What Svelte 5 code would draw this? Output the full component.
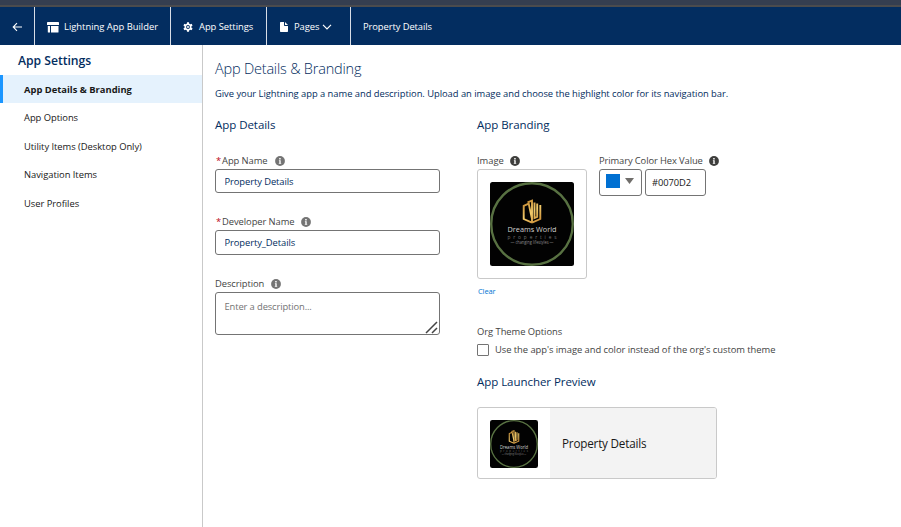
<script>
  const menu = ['App Details & Branding', 'App Options', 'Utility Items (Desktop Only)', 'Navigation Items', 'User Profiles'];
  let active = $state(0);
  let appName = $state('Property Details');
  let developerName = $state('Property_Details');
  let hex = $state('#0070D2');
</script>

{#snippet info(dark)}
  <svg class="info" class:dark viewBox="0 0 10 10" aria-hidden="true">
    <circle cx="5" cy="5" r="4.9" />
    <path d="M4.2 2.1h1.5v1.3H4.2zM3.9 4.2h1.8v2.8h.5v.8H3.8V7h.5V5h-.4z" />
  </svg>
{/snippet}

{#snippet logo(size)}
  <svg class="logo" width={size} height={size} viewBox="0 0 84 84">
    <defs>
      <linearGradient id={`gold${size}`} gradientUnits="userSpaceOnUse" x1="33" y1="18" x2="51" y2="42">
        <stop offset="0" stop-color="#b97a26" />
        <stop offset=".5" stop-color="#f3cc6c" />
        <stop offset="1" stop-color="#c07d28" />
      </linearGradient>
    </defs>
    <rect width="84" height="84" rx={size > 60 ? 2.5 : 4} fill="#020202" />
    <circle cx="42" cy="42" r="40.8" fill="none" stroke="#587142" stroke-width="2.4" />
    <g fill="none" stroke={`url(#gold${size})`} stroke-width="1.9">
      <path d="M42 40.600l-8.300-3.600V23.800l5-2.200 3.300 15.500" />
      <path d="M37.500 20.300l4.500-1.600v21.800" />
      <path d="M42 40.600l8.300-3.600V23" />
      <path d="M44.500 20.500V36l2.700-1.200V21.500" />
    </g>
    <text x="42" y="50.3" font-size="7.8" textLength="49" lengthAdjust="spacingAndGlyphs" fill="#d2d2d2">Dreams World</text>
    <text x="42" y="56.5" font-size="4.8" textLength="49" fill="#747474">properties</text>
    <text x="42" y="62" font-size="4.8" textLength="43" lengthAdjust="spacingAndGlyphs" fill="#8a8a8a">— changing lifestyles —</text>
  </svg>
{/snippet}

<div class="app">
  <div class="chrome"></div>
  <header>
    <button class="back" aria-label="Back">
      <svg width="11" height="10" viewBox="0 0 11 10"><path d="M10 5H1.5M5 1.2L1.2 5 5 8.8" fill="none" stroke="#fff" stroke-width="1.1" /></svg>
    </button>
    <div class="tab builder">
      <svg width="12" height="11" viewBox="0 0 12 11" fill="#fff"><path d="M.8 0h10.4q.8 0 .8.8V3H0V.8Q0 0 .8 0zM.8 4H3v6.500H1.400Q.8 10.500.8 9.900zM4 4h7.500v5.900q0 .6-.6.6H4z" /></svg>
      <span>Lightning App Builder</span>
    </div>
    <div class="tab settings">
      <svg width="10" height="10" viewBox="0 0 10 10"><path d="M5 .3v9.400M.9 2.700l8.200 4.600M9.100 2.700L.9 7.300" stroke="#fff" stroke-width="2.100" /><circle cx="5" cy="5" r="2.700" fill="#032d60" stroke="#fff" stroke-width="1.600" /><circle cx="5" cy="5" r="1" fill="#fff" /></svg>
      <span>App Settings</span>
    </div>
    <div class="tab pages">
      <svg width="8" height="10" viewBox="0 0 8 10" fill="#fff"><path d="M.7 0H4v3.200q0 .8.8.8H8v5.300q0 .7-.7.7H.7Q0 10 0 9.300V.7Q0 0 .7 0zM5 0l3 3H5.300Q5 3 5 2.700z" /></svg>
      <span>Pages</span>
      <svg class="chev" width="10" height="6" viewBox="0 0 10 6"><path d="M1 .8l4 4 4-4" fill="none" stroke="#fff" stroke-width="1.200" /></svg>
    </div>
    <div class="tab current"><span>Property Details</span></div>
  </header>

  <div class="body">
    <nav>
      <h2>App Settings</h2>
      {#each menu as item, i}
        <button class="item" class:active={active === i} onclick={() => (active = i)}>{item}</button>
      {/each}
    </nav>

    <main>
      <h1>App Details &amp; Branding</h1>
      <p class="lead">Give your Lightning app a name and description. Upload an image and choose the highlight color for its navigation bar.</p>

      <div class="columns">
        <section class="details">
          <h3>App Details</h3>
          <div class="field">
            <label for="name"><i>*</i>App Name {@render info(false)}</label>
            <input id="name" bind:value={appName} />
          </div>
          <div class="field">
            <label for="dev"><i>*</i>Developer Name {@render info(false)}</label>
            <input id="dev" class="tall" bind:value={developerName} />
          </div>
          <div class="field">
            <label for="desc">Description {@render info(false)}</label>
            <div class="area">
              <textarea id="desc" placeholder="Enter a description..."></textarea>
              <svg class="grip" width="13" height="13" viewBox="0 0 13 13"><path d="M1 12L12 1M7 12l5-5" stroke="#444" stroke-width="1.500" /></svg>
            </div>
          </div>
        </section>

        <section class="branding">
          <h3>App Branding</h3>
          <div class="row">
            <div class="image">
              <div class="label">Image {@render info(true)}</div>
              <div class="frame">{@render logo(84)}</div>
              <button class="clear">Clear</button>
            </div>
            <div class="color">
              <div class="label primary">Primary Color Hex Value {@render info(true)}</div>
              <div class="picker">
                <button class="swatch" aria-label="Choose color"><b></b><svg width="9" height="6" viewBox="0 0 9 6"><path d="M0 0h9L4.500 6z" fill="#706e6b" /></svg></button>
                <input class="hex" bind:value={hex} aria-label="Hex value" />
              </div>
            </div>
          </div>
          <div class="label org">Org Theme Options</div>
          <label class="check"><input type="checkbox" /><span>Use the app's image and color instead of the org's custom theme</span></label>
          <h3 class="preview-title">App Launcher Preview</h3>
          <div class="preview">
            <div class="thumb">{@render logo(48)}</div>
            <div class="name">Property Details</div>
          </div>
        </section>
      </div>
    </main>
  </div>
</div>

<style>
  .app { width: 901px; height: 527px; overflow: hidden; display: flex; flex-direction: column; background: #fff; color: #181818; font: 9.4px/14px "Open Sans", "Noto Sans", sans-serif; letter-spacing: -0.035px; }
  .app * { box-sizing: border-box; }
  h1, h2, h3, p { margin: 0; }
  button { font: inherit; letter-spacing: inherit; color: inherit; background: none; border: 0; padding: 0; text-align: left; }
  input, textarea { font: inherit; letter-spacing: -0.08px; color: #032d60; background: #fff; border: 1px solid #747474; border-radius: 3px; margin: 0; display: block; outline: 0; }
  svg { flex: none; display: block; }

  .chrome { height: 7px; background: #353e50; border-bottom: 2px solid #4b4b4d; flex: none; }
  header { height: 38px; flex: none; display: flex; background: #032d60; color: #fff; }
  .back { width: 35px; border-right: 1px solid #d8dde6; padding: 1px 0 0 12px; }
  .tab { display: flex; align-items: center; border-right: 1px solid #d8dde6; padding: 2px 0 0 12px; white-space: nowrap; }
  .tab span { font-weight: 500; }
  .builder { width: 136px; gap: 5px; letter-spacing: 0; }
  .settings { width: 96px; gap: 6px; }
  .pages { width: 84px; gap: 6px; padding-left: 13px; }
  .chev { margin-left: -4px; }
  .current { border: 0; letter-spacing: -0.08px; }

  .body { flex: 1; display: flex; min-height: 0; }
  nav { width: 203px; border-right: 1px solid #c9c9c9; display: flex; flex-direction: column; }
  h2 { font-size: 12.2px; line-height: 30px; height: 30px; padding: 1px 0 0 18px; color: #032d60; font-weight: 600; }
  .item { height: 28.500px; padding: 1px 0 0 24px; white-space: nowrap; }
  .item.active { height: 28px; margin-bottom: .5px; background: #e5f2fd; border-left: 3px solid #1b96ff; padding-left: 21px; font-weight: 700; letter-spacing: 0; }

  main { flex: 1; padding: 15px 0 0 12px; color: #032d60; }
  h1 { font-size: 14.5px; line-height: 18px; font-weight: 300; letter-spacing: -0.2px; }
  .lead { margin-top: 9px; white-space: nowrap; }
  .columns { display: flex; margin-top: 16px; }
  .details { width: 225px; margin-right: 37px; }
  .branding { width: 320px; }
  h3 { font-size: 11.5px; line-height: 16px; font-weight: 400; color: #032d60; letter-spacing: -0.05px; }
  label, .label { display: flex; align-items: center; height: 14px; color: #444; white-space: nowrap; }
  label i { font-style: normal; color: #ba0517; padding: 0 1px; }
  .info { width: 10px; height: 10px; margin-left: 7px; fill: #747474; }
  .info path { fill: #fff; }
  .info.dark { fill: #3e3e3c; }
  .details h3 { margin-bottom: 21px; }
  .field { margin-bottom: 22px; letter-spacing: -0.08px; }
  .field input { width: 225px; height: 24px; padding: 1px 8.5px 0; margin-top: 1px; }
  .field input.tall { height: 25px; padding-top: 0; }
  .area { position: relative; margin-top: 1px; }
  textarea { width: 225px; height: 43px; resize: none; padding: 7px 8.5px; letter-spacing: -0.12px; }
  textarea::placeholder { color: #747474; opacity: 1; }
  .grip { position: absolute; right: 2px; bottom: 1px; }

  .branding h3 { margin-bottom: 21px; }
  .row { display: flex; }
  .image { width: 110px; margin-right: 12px; }
  .frame { height: 110px; margin-top: 1px; border: 1px solid #c9c9c9; border-radius: 3px; display: grid; place-items: center; }
  .clear { display: block; font-size: 7.5px; line-height: 12px; margin: 6px 0 0 1px; color: #0176d3; letter-spacing: -0.1px; }
  .primary { letter-spacing: -0.11px; }
  .primary .info, .image .info { margin-left: 6px; }
  .picker { display: flex; margin-top: 1px; gap: 3px; }
  .swatch { width: 43px; height: 27px; border: 1px solid #747474; border-radius: 3px; display: flex; padding: 4px 0 0 6px; gap: 5px; }
  .swatch b { width: 14px; height: 14px; background: #0070d2; }
  .swatch svg { margin-top: 4px; }
  .hex { width: 61px; height: 27px; padding: 0 6px; color: #181818; }
  .org { margin-top: 28px; }
  .check { margin-top: 4px; letter-spacing: -0.045px; }
  .check input { appearance: none; width: 12px; height: 12px; border-radius: 1px; margin: -1px 6px 0 0; }
  .branding .preview-title { margin: 17px 0; }
  .preview { width: 240px; height: 72px; border: 1px solid #c9c9c9; border-radius: 3px; display: flex; overflow: hidden; }
  .thumb { width: 72px; display: grid; place-items: center; padding-top: 1px; }
  .name { flex: 1; background: #f3f3f3; padding-left: 12px; line-height: 71px; font-size: 11.7px; color: #181818; letter-spacing: -0.2px; }
  .logo text { font-family: "Open Sans", sans-serif; text-anchor: middle; letter-spacing: 0; }
</style>
